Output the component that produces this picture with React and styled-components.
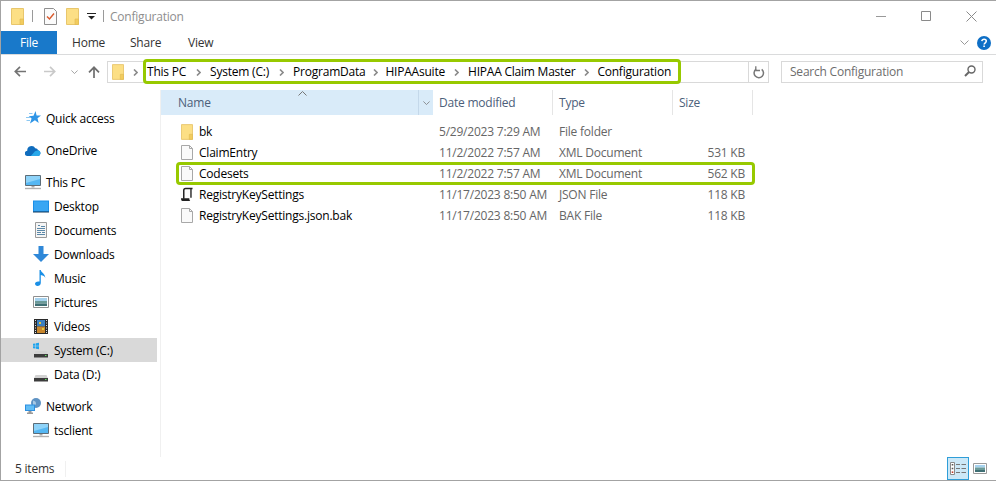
import React from "react";
import styled, { createGlobalStyle } from "styled-components";

const Global = createGlobalStyle`
  html, body { margin: 0; padding: 0; background: #fff; }
  * { box-sizing: border-box; }
`;

const Window = styled.div`
  position: relative;
  width: 996px;
  height: 481px;
  overflow: hidden;
  background: #fff;
  border-top: 1px solid #a3a3a3;
  border-left: 1px solid #a3a3a3;
  border-bottom: 1px solid #a3a3a3;
  font-family: "Open Sans", "Noto Sans", sans-serif;
  font-size: 12px;
  letter-spacing: -0.22px;
  color: #000;
  display: flex;
  flex-direction: column;
`;

const TitleBar = styled.div`
  height: 30px;
  flex: none;
  display: flex;
  align-items: center;
  padding-left: 10px;
`;
const TitleSep = styled.span`
  width: 1px;
  height: 12px;
  background: #9a9a9a;
  margin: ${(p) => p.$m};
`;
const TitleIcon = styled.span`
  display: flex;
  margin-left: ${(p) => p.$ml}px;
`;
const TitleText = styled.span`
  color: #8e8e8e;
  margin-left: 6px;
`;
const WinControls = styled.div`
  margin-left: auto;
  display: flex;
  align-items: center;
  gap: 35px;
  padding-right: 19px;
`;

const Ribbon = styled.div`
  height: 24px;
  flex: none;
  display: flex;
  align-items: stretch;
  border-bottom: 1px solid #dadbdc;
`;
const FileTab = styled.div`
  width: 56px;
  background: #1979ca;
  color: #fff;
  display: flex;
  align-items: center;
  justify-content: center;
  padding-bottom: 1px;
`;
const Tab = styled.div`
  width: 58px;
  color: #333;
  display: flex;
  align-items: center;
  padding: 0 0 1px 15px;
`;
const RibbonEnd = styled.div`
  margin-left: auto;
  display: flex;
  align-items: center;
  gap: 8px;
  padding-right: 5px;
`;

const AddressRow = styled.div`
  height: 35px;
  flex: none;
  display: flex;
  align-items: flex-start;
  padding-top: 6px;
`;
const NavButtons = styled.div`
  width: 106px;
  height: 21px;
  flex: none;
  display: flex;
  align-items: center;
  padding-left: 13px;
`;
const NavSpacer = styled.span`
  width: ${(p) => p.$w}px;
  flex: none;
`;
const AddressBox = styled.div`
  width: 662px;
  height: 22px;
  flex: none;
  display: flex;
  align-items: center;
  border: 1px solid #d9d9d9;
  padding-left: 4px;
`;
const Crumb = styled.span`
  color: #000;
  white-space: nowrap;
  padding-bottom: 2px;
`;
const CrumbSep = styled.span`
  display: flex;
  width: ${(p) => p.$w}px;
  justify-content: center;
  flex: none;
`;
const Refresh = styled.div`
  margin-left: auto;
  width: 20px;
  height: 20px;
  border-left: 1px solid #d9d9d9;
  display: flex;
  align-items: center;
  justify-content: center;
`;
const SearchBox = styled.div`
  width: 202px;
  height: 22px;
  margin-left: 12px;
  flex: none;
  border: 1px solid #d9d9d9;
  display: flex;
  align-items: center;
  justify-content: space-between;
  padding: 0 6px 2px 8px;
  color: #6d6d6d;
`;

const Body = styled.div`
  flex: 1;
  min-height: 0;
  display: flex;
`;
const Nav = styled.nav`
  width: 160px;
  flex: none;
  padding-top: 16px;
  border-right: 1px solid #f0f0f0;
`;
const NavGroup = styled.div`
  margin-bottom: 8px;
`;
const NavRow = styled.div`
  height: 24px;
  width: 156px;
  display: flex;
  align-items: center;
  gap: 5px;
  padding-left: ${(p) => (p.$sub ? 32 : 24)}px;
  background: ${(p) => (p.$active ? "#d9d9d9" : "transparent")};
  color: #000;
  white-space: nowrap;
`;
const NavIcon = styled.span`
  width: 16px;
  height: 16px;
  flex: none;
  display: flex;
  align-items: center;
  justify-content: center;
`;

const Main = styled.main`
  flex: 1;
  min-width: 0;
`;
const ListHeader = styled.div`
  display: grid;
  grid-template-columns: 272px 120px 120px 80px;
  height: 25px;
`;
const HeadCell = styled.div`
  position: relative;
  display: flex;
  align-items: center;
  padding-left: 6px;
  color: #4c607a;
  border-right: 1px solid #e5e5e5;
  padding-bottom: 1px;
`;
const NameHead = styled(HeadCell)`
  background: #d9ebf9;
  border-right: none;
  padding-left: 17px;
`;
const SortArrow = styled.span`
  position: absolute;
  left: 137px;
  top: 1px;
  display: flex;
`;
const HeadDrop = styled.span`
  position: absolute;
  right: 0;
  top: 0;
  bottom: 0;
  width: 15px;
  border-left: 1px solid #c4d8ea;
  display: flex;
  align-items: center;
  justify-content: center;
`;
const FileList = styled.div`
  padding-top: 6px;
`;
const FileRow = styled.div`
  display: grid;
  grid-template-columns: 272px 120px 120px 72px;
  height: 21px;
  align-items: center;
  color: #666;
`;
const NameCell = styled.div`
  display: flex;
  align-items: center;
  gap: 6px;
  padding-left: 20px;
  color: #000;
`;
const FileIconSlot = styled.span`
  width: 12px;
  flex: none;
  display: flex;
  justify-content: center;
`;
const TextCell = styled.div`
  padding-left: 6px;
  white-space: nowrap;
`;
const SizeCell = styled.div`
  text-align: right;
  white-space: nowrap;
`;

const StatusBar = styled.div`
  height: 23px;
  flex: none;
  display: flex;
  align-items: center;
  padding-left: 14px;
  color: #333;
`;
const StatusSep = styled.span`
  width: 1px;
  height: 16px;
  background: #f0f0f0;
  margin-left: 11px;
`;
const ViewButtons = styled.div`
  margin-left: auto;
  display: flex;
  align-items: center;
  height: 100%;
  padding-right: 9px;
  gap: 4px;
`;
const ViewBtn = styled.div`
  width: ${(p) => (p.$on ? 22 : 14)}px;
  height: 23px;
  display: flex;
  align-items: center;
  justify-content: center;
  background: ${(p) => (p.$on ? "#cce8f7" : "transparent")};
  border: ${(p) => (p.$on ? "1px solid #2f9ed8" : "none")};
`;

const Highlight = styled.div`
  position: absolute;
  left: ${(p) => p.$x}px;
  top: ${(p) => p.$y}px;
  width: ${(p) => p.$w}px;
  height: ${(p) => p.$h}px;
  border: 3px solid #97c900;
  border-radius: 4px;
  pointer-events: none;
`;

/* ---------- icons ---------- */
const Folder = ({ w = 13, h = 17 }) => (
  <svg width={w} height={h} viewBox="0 0 13 17">
    <path d="M.5.5h12v16H.5z" fill="#fcdf85" stroke="#e8c66c" />
    <path d="M9 11h3.500v5.500H9z" fill="#f2cc5e" stroke="#dfb850" strokeWidth=".6" />
  </svg>
);
const TaskIcon = () => (
  <svg width="13" height="17" viewBox="0 0 13 17">
    <path d="M.5.5h9l3 3v13H.5z" fill="#fbfbfb" stroke="#8f8f8f" />
    <path d="M3 8.500l2.500 2.500L10 5.500" fill="none" stroke="#d9582b" strokeWidth="1.400" />
  </svg>
);
const QuickDrop = () => (
  <svg width="9" height="7" viewBox="0 0 9 7">
    <path d="M0 .5h9" stroke="#222" />
    <path d="M1 3h7L4.500 6.500z" fill="#222" />
  </svg>
);
const Minimize = () => (
  <svg width="10" height="1" viewBox="0 0 10 1"><path d="M0 .5h10" stroke="#999" /></svg>
);
const Maximize = () => (
  <svg width="10" height="10" viewBox="0 0 10 10"><path d="M.5.5h9v9h-9z" fill="none" stroke="#8a8a8a" /></svg>
);
const CloseX = () => (
  <svg width="11" height="11" viewBox="0 0 11 11"><path d="M.5.5l10 10M10.500.5l-10 10" stroke="#8a8a8a" /></svg>
);
const Chevron = ({ color = "#999", w = 9, h = 5 }) => (
  <svg width={w} height={h} viewBox="0 0 9 5"><path d="M.5.5l4 4 4-4" fill="none" stroke={color} /></svg>
);
const Help = () => (
  <svg width="14" height="14" viewBox="0 0 14 14">
    <circle cx="7" cy="7" r="7" fill="#0e6fc6" />
    <path d="M4.800 5.200C5 3.800 6 3.200 7.100 3.200c1.300 0 2.200.8 2.200 1.900 0 1.700-2.200 1.700-2.200 3.500" fill="none" stroke="#fff" strokeWidth="1.500" />
    <path d="M6.300 9.600h1.600v1.500H6.300z" fill="#fff" />
  </svg>
);
const ArrowLeft = ({ color }) => (
  <svg width="12" height="11" viewBox="0 0 12 11"><path d="M12 5.500H1.500M6 .8L1.300 5.500 6 10.200" fill="none" stroke={color} strokeWidth="1.700" /></svg>
);
const ArrowRight = ({ color }) => (
  <svg width="12" height="11" viewBox="0 0 12 11"><path d="M0 5.500h10.500M6 .8l4.700 4.700L6 10.200" fill="none" stroke={color} strokeWidth="1.700" /></svg>
);
const ArrowUp = () => (
  <svg width="12" height="12" viewBox="0 0 12 12"><path d="M6 12V1.500M1 6.300L6 1.300l5 5" fill="none" stroke="#6e6e6e" strokeWidth="1.700" /></svg>
);
const CrumbChev = () => (
  <svg width="5" height="7" viewBox="0 0 5 7"><path d="M1 .5l3 3-3 3" fill="none" stroke="#8a8a8a" strokeWidth="1.600" /></svg>
);
const RefreshIcon = () => (
  <svg width="12" height="13" viewBox="0 0 12 13">
    <path d="M8.700 3.300A4.700 4.700 0 1 1 3 3.200" fill="none" stroke="#777" strokeWidth="1.500" />
    <path d="M2.800 .3v4.200h4.200" fill="none" stroke="#777" strokeWidth="1.300" />
  </svg>
);
const SearchIcon = () => (
  <svg width="12" height="12" viewBox="0 0 12 12">
    <circle cx="7.500" cy="4.500" r="3.500" fill="none" stroke="#666" strokeWidth="1.400" />
    <path d="M5 7L1 11" stroke="#666" strokeWidth="2" />
  </svg>
);
const Star = () => (
  <svg width="16" height="14" viewBox="0 0 16 14">
    <path d="M10.500 0l1.100 4.400 4.400.2-3.500 2.700 1.200 4.700-3.800-2.700L5 12.500l1.600-5L3.800 5.300l4.700-.5z" fill="#2f95e6" />
    <path d="M1 6.500h4M1.500 9.500h3.500M4 2.500h3.500" stroke="#8cc8f2" strokeWidth="1" />
  </svg>
);
const Cloud = () => (
  <svg width="16" height="11" viewBox="0 0 16 11">
    <path d="M2.600 11A2.600 2.600 0 0 1 2.300 5.800 4.300 4.300 0 0 1 10.300 3.200 3.500 3.500 0 0 1 13.200 5.300 2.900 2.900 0 0 1 13 11z" fill="#0f6cbd" />
    <path d="M5.800 11l4.200-4.800 3.200-.9A2.900 2.900 0 0 1 13 11z" fill="#28a8ea" />
  </svg>
);
const Monitor = () => (
  <svg width="16" height="16" viewBox="0 0 16 16">
    <path d="M.5 1.500h15v10H.5z" fill="#55b7f3" stroke="#5d6d78" />
    <path d="M1 2h14v3L1 9z" fill="#8ed3f9" />
    <path d="M6.500 12h3v1.500h-3z" fill="#a8a8a8" />
    <path d="M0 14.500h16" stroke="#b0b0b0" strokeWidth="1.400" />
  </svg>
);
const DesktopIco = () => (
  <svg width="16" height="13" viewBox="0 0 16 13">
    <path d="M0 .5h16v11.500H0z" fill="#1b8fe8" />
    <path d="M1 1.500h14v9.500H1z" fill="#39a6f3" />
    <path d="M0 11.500h16v1H0z" fill="#143a5c" />
  </svg>
);
const DocsIco = () => (
  <svg width="12" height="16" viewBox="0 0 12 16">
    <path d="M.5.5h11v15H.5z" fill="#f5f5f5" stroke="#9a9a9a" />
    <path d="M3 3.500h2M6 4.500h4M2 6.500h8M2 8.500h8M2 10.500h4M7 10.500h3M2 12.500h8" stroke="#5b88a8" strokeWidth="1" />
  </svg>
);
const DownIco = () => (
  <svg width="16" height="16" viewBox="0 0 16 16">
    <path d="M5.500 0h5v8H16l-8 8-8-8h5.500z" fill="#2f88d8" />
  </svg>
);
const MusicIco = () => (
  <svg width="12" height="16" viewBox="0 0 12 16">
    <path d="M4.500 0h1.300c.3 2.500 4.500 3.700 4.500 8-.7-1.700-2-2.600-4.500-3V13c0 1.700-1.600 3-3.300 3C1 16 0 15 0 13.800c0-1.500 1.700-2.700 4.500-2.200z" fill="#1a8fe6" />
  </svg>
);
const PicturesIco = () => (
  <svg width="16" height="12" viewBox="0 0 16 12">
    <path d="M.5.500h15v11H.5z" fill="#fff" stroke="#8f8f8f" />
    <path d="M2 2h12v3H2z" fill="#a6d2ee" />
    <path d="M2 5h12v2.500H2z" fill="#6b9a98" />
    <path d="M2 7.500h12V10H2z" fill="#3f6f74" />
  </svg>
);
const VideosIco = () => (
  <svg width="14" height="15" viewBox="0 0 14 15">
    <path d="M0 0h14v15H0z" fill="#2a2a2a" />
    <path d="M3 1h8v6.500H3z" fill="#3b7fc0" />
    <path d="M3 7.500h8V14H3z" fill="#c8862c" />
    <path d="M5 3h2v2H5zM8 9h2v2H8z" fill="#e5c73a" />
    <path d="M1 1.500h1M1 4h1M1 6.500h1M1 9h1M1 11.500h1M1 13.500h1M12 1.500h1M12 4h1M12 6.500h1M12 9h1M12 11.500h1M12 13.500h1" stroke="#ddd" />
  </svg>
);
const DriveBase = () => (
  <>
    <path d="M2.500 9h11l1.500 3.500H1z" fill="#d2d2d2" />
    <path d="M1 12h14v3.500H1z" fill="#3c3c3c" />
    <path d="M12 13h1.500v1H12z" fill="#5fe35f" />
  </>
);
const SystemIco = () => (
  <svg width="16" height="16" viewBox="0 0 16 16">
    <path d="M0 1.800l2.500-.4v2.300H0zM3 1.300L6 .8v2.900H3zM0 4.300h2.500v2.300L0 6.200zM3 4.300h3v2.900l-3-.4z" fill="#1fa4ee" />
    <DriveBase />
  </svg>
);
const DriveIco = () => (
  <svg width="16" height="16" viewBox="0 0 16 16"><DriveBase /></svg>
);
const NetworkIco = () => (
  <svg width="16" height="16" viewBox="0 0 16 16">
    <circle cx="11" cy="5" r="5" fill="#5f93c4" />
    <path d="M8 2.500c2 .3 3 1.500 3 3s-1.500 2-3 1.500z" fill="#a8c9e4" />
    <path d="M0 6.500h10V13H0z" fill="#2c8fe0" />
    <path d="M1 7.500h8V12H1z" fill="#62bdf5" />
    <path d="M3.500 13h3v1.500h-3zM2 14.500h6V16H2z" fill="#9a9a9a" />
  </svg>
);
const FileIco = () => (
  <svg width="12" height="15" viewBox="0 0 12 15">
    <path d="M.5.500h8l3 3v11H.5z" fill="#fafafa" stroke="#a8a8a8" />
    <path d="M8.500.500v3h3" fill="none" stroke="#a8a8a8" />
  </svg>
);
const JsonIco = () => (
  <svg width="13" height="15" viewBox="0 0 13 15">
    <path d="M12.500 1H5C3.800 1 3 1.800 3 3v9" fill="none" stroke="#222" strokeWidth="1.600" />
    <path d="M10.800 1.500V11" stroke="#222" strokeWidth="1.500" />
    <path d="M0 11.500h9c0 1.500.5 2.500 1 3H1.500C.5 14.500 0 13 0 11.500z" fill="#222" />
  </svg>
);
const Details = () => (
  <svg width="16" height="13" viewBox="0 0 16 13">
    <path d="M.5.500h4v12h-4z" fill="#fff" stroke="#8a8a8a" />
    <path d="M1.700 2h1.600v1.600H1.700zM1.700 5.700h1.600v1.600H1.700z" fill="#555" />
    <path d="M1.700 9.400h1.600V11H1.700z" fill="#c0392b" />
    <path d="M6 2.500h4M11.500 2.500H16M6 6.500h4M11.500 6.500H16M6 10.500h4M11.500 10.500H16" stroke="#777" />
  </svg>
);
const LargeIco = () => (
  <svg width="14" height="11" viewBox="0 0 14 11">
    <path d="M.5.500h13v10H.5z" fill="#fff" stroke="#9a9a9a" />
    <path d="M2 2h10v2.500H2z" fill="#a6d2ee" />
    <path d="M2 4.500h10V7H2z" fill="#6b9a98" />
    <path d="M2 7h10v2H2z" fill="#3f6f74" />
  </svg>
);

const crumbs = [
  { label: "This PC" },
  { label: "System (C:)", gap: 24 },
  { label: "ProgramData", gap: 24 },
  { label: "HIPAAsuite", gap: 20 },
  { label: "HIPAA Claim Master", gap: 23 },
  { label: "Configuration", gap: 22 },
];

const navGroups = [
  [{ label: "Quick access", icon: <Star /> }],
  [{ label: "OneDrive", icon: <Cloud /> }],
  [
    { label: "This PC", icon: <Monitor /> },
    { label: "Desktop", icon: <DesktopIco />, sub: true },
    { label: "Documents", icon: <DocsIco />, sub: true },
    { label: "Downloads", icon: <DownIco />, sub: true },
    { label: "Music", icon: <MusicIco />, sub: true },
    { label: "Pictures", icon: <PicturesIco />, sub: true },
    { label: "Videos", icon: <VideosIco />, sub: true },
    { label: "System (C:)", icon: <SystemIco />, sub: true, active: true },
    { label: "Data (D:)", icon: <DriveIco />, sub: true },
  ],
  [
    { label: "Network", icon: <NetworkIco /> },
    { label: "tsclient", icon: <Monitor />, sub: true },
  ],
];

const files = [
  { name: "bk", icon: <Folder w={12} h={16} />, date: "5/29/2023 7:29 AM", type: "File folder", size: "" },
  { name: "ClaimEntry", icon: <FileIco />, date: "11/2/2022 7:57 AM", type: "XML Document", size: "531 KB" },
  { name: "Codesets", icon: <FileIco />, date: "11/2/2022 7:57 AM", type: "XML Document", size: "562 KB" },
  { name: "RegistryKeySettings", icon: <JsonIco />, date: "11/17/2023 8:50 AM", type: "JSON File", size: "118 KB" },
  { name: "RegistryKeySettings.json.bak", icon: <FileIco />, date: "11/17/2023 8:50 AM", type: "BAK File", size: "118 KB" },
];

export default function App() {
  return (
    <>
      <Global />
      <Window>
        <TitleBar>
          <Folder />
          <TitleSep $m="0 0 0 8px" />
          <TitleIcon $ml={11}><TaskIcon /></TitleIcon>
          <TitleIcon $ml={9}><Folder /></TitleIcon>
          <TitleIcon $ml={8}><QuickDrop /></TitleIcon>
          <TitleSep $m="0 0 0 7px" />
          <TitleText>Configuration</TitleText>
          <WinControls>
            <Minimize />
            <Maximize />
            <CloseX />
          </WinControls>
        </TitleBar>
        <Ribbon>
          <FileTab>File</FileTab>
          <Tab>Home</Tab>
          <Tab>Share</Tab>
          <Tab>View</Tab>
          <RibbonEnd>
            <Chevron />
            <Help />
          </RibbonEnd>
        </Ribbon>
        <AddressRow>
          <NavButtons>
            <ArrowLeft color="#737373" />
            <NavSpacer $w={18} />
            <ArrowRight color="#c9c9c9" />
            <NavSpacer $w={15} />
            <Chevron color="#8a8a8a" w={7} h={4} />
            <NavSpacer $w={10} />
            <ArrowUp />
          </NavButtons>
          <AddressBox>
            <Folder w={12} h={16} />
            <CrumbSep $w={23}><CrumbChev /></CrumbSep>
            {crumbs.map((c) => (
              <React.Fragment key={c.label}>
                {c.gap && <CrumbSep $w={c.gap}><CrumbChev /></CrumbSep>}
                <Crumb>{c.label}</Crumb>
              </React.Fragment>
            ))}
            <Refresh><RefreshIcon /></Refresh>
          </AddressBox>
          <SearchBox>
            Search Configuration
            <SearchIcon />
          </SearchBox>
        </AddressRow>
        <Body>
          <Nav>
            {navGroups.map((g, i) => (
              <NavGroup key={i}>
                {g.map((n) => (
                  <NavRow key={n.label} $sub={n.sub} $active={n.active}>
                    <NavIcon>{n.icon}</NavIcon>
                    {n.label}
                  </NavRow>
                ))}
              </NavGroup>
            ))}
          </Nav>
          <Main>
            <ListHeader>
              <NameHead>
                Name
                <SortArrow><svg width="9" height="5" viewBox="0 0 9 5"><path d="M.5 4.500l4-4 4 4" fill="none" stroke="#777" /></svg></SortArrow>
                <HeadDrop><Chevron color="#777" w={7} h={4} /></HeadDrop>
              </NameHead>
              <HeadCell>Date modified</HeadCell>
              <HeadCell>Type</HeadCell>
              <HeadCell>Size</HeadCell>
            </ListHeader>
            <FileList>
              {files.map((f) => (
                <FileRow key={f.name}>
                  <NameCell><FileIconSlot>{f.icon}</FileIconSlot>{f.name}</NameCell>
                  <TextCell>{f.date}</TextCell>
                  <TextCell>{f.type}</TextCell>
                  <SizeCell>{f.size}</SizeCell>
                </FileRow>
              ))}
            </FileList>
          </Main>
        </Body>
        <StatusBar>
          5 items
          <StatusSep />
          <ViewButtons>
            <ViewBtn $on><Details /></ViewBtn>
            <ViewBtn><LargeIco /></ViewBtn>
          </ViewButtons>
        </StatusBar>
        <Highlight $x={142} $y={58} $w={538} $h={25} />
        <Highlight $x={175} $y={161} $w={579} $h={23} />
      </Window>
    </>
  );
}
